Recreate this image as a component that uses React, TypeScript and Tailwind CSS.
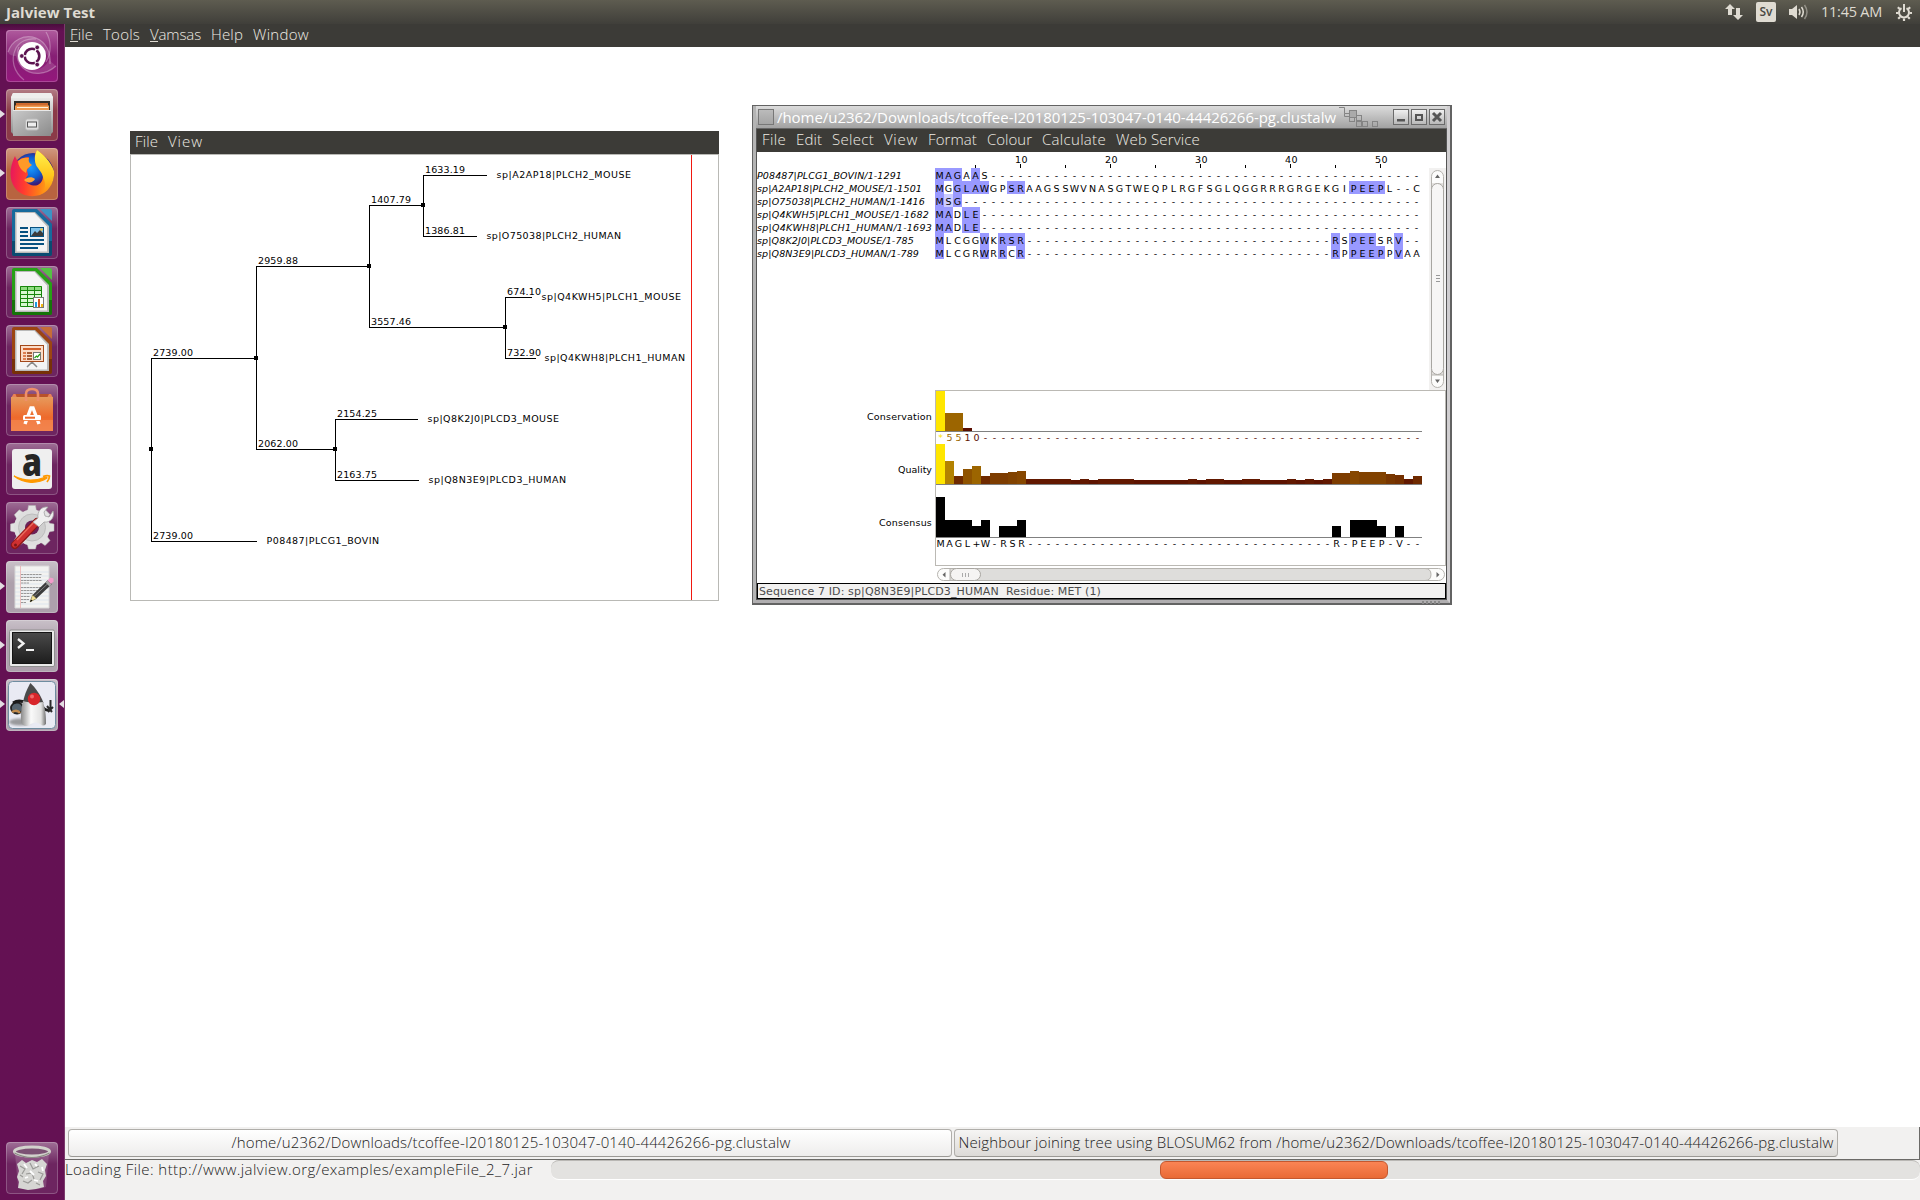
import React, { useLayoutEffect, useRef, useState } from "react";

/* Text whose letter spacing is measured so that it takes the given width. */
function Fit({ w, children, className = "" }: { w: number; children: string; className?: string }) {
  const ref = useRef<HTMLSpanElement>(null);
  const [ls, setLs] = useState(0);
  useLayoutEffect(() => {
    const el = ref.current;
    if (!el) return;
    const natural = el.getBoundingClientRect().width;
    setLs((w - natural) / children.length);
  }, [w, children]);
  return (
    <span ref={ref} style={{ letterSpacing: ls }} className={"inline-block shrink-0 whitespace-pre " + className}>
      {children}
    </span>
  );
}

/* ---------------------------------------------------------------- launcher */

function DashIcon() {
  return (
    <>
      <rect width="52" height="52" rx="4" fill="url(#dash)" />
      <g fill="none" stroke="#fff" strokeOpacity=".3" strokeWidth="1.2">
        <path d="M2 22C6 10 18 4 30 8c10 4 15 14 14 26" />
        <path d="M18 50C8 42 4 30 10 18c4-7 12-10 20-9" />
        <path d="M50 36c-10 9-24 10-33 2C11 32 10 24 13 17" />
        <path d="M40 2c5 8 6 20 0 30" />
      </g>
      <path d="M2 22C6 10 18 4 30 8c10 4 15 14 14 26-2-12-9-20-18-20-9-1-16 5-16 12C5 26 3 24 2 22Z" fill="#fff" fillOpacity=".14" />
      <path d="M50 36c-10 9-24 10-33 2l-4-5c8 10 25 9 30-3Z" fill="#fff" fillOpacity=".13" />
      <circle cx="26" cy="26" r="14" fill="#fff" />
      <circle cx="26" cy="26" r="7.3" fill="none" stroke="#5c1350" strokeWidth="2.6" strokeDasharray="13.8 1.5" strokeDashoffset="6.9" />
      {[[15.8, 26], [31.2, 17.4], [31.2, 34.6]].map(([x, y]) => (
        <circle key={x + "-" + y} cx={x} cy={y} r="2.3" fill="#5c1350" stroke="#fff" strokeWidth=".7" />
      ))}
    </>
  );
}

function FilesIcon() {
  return (
    <>
      <path d="M7 4h38l2 4v35l-3 3H8l-3-3V8Z" fill="url(#steel)" />
      <path d="M7 4h38l2 5H5Z" fill="#eee" />
      <rect x="8" y="12" width="36" height="11" fill="#2f2c28" />
      <path d="M10 14h32v8H10Z" fill="#cf6a2e" />
      <path d="M9 16.500h34v6H9Z" fill="#ee9a50" />
      <path d="M11 18.500h31" stroke="#fff3dc" strokeWidth="1" />
      <path d="M7 21h38v26H7Z" fill="url(#steel2)" />
      <path d="M7 21.500h38" stroke="#e8e8e8" />
      <rect x="19.500" y="30" width="13" height="11" rx="2" fill="#ddd" stroke="#bbb" />
      <rect x="21.500" y="33" width="9" height="5" fill="#eee" stroke="#555" />
    </>
  );
}

function FirefoxIcon() {
  return (
    <>
      <circle cx="27" cy="26" r="21" fill="url(#fxblue)" />
      <path d="M31 2c7 5 13 12 15 19 3 12-3 22-12 26-10 3-20 0-25-7C3 32 3 20 9 8c1 3 2 4 3 5 3-3 7-4 11-4-1 3-1 5 2 8l-4 5 1 5c-3 3-3 7 1 9 7 4 14 0 14-8 0-5-3-8-6-10-3-6-3-11 0-16Z" fill="url(#fxfire)" />
      <path d="M31 2c7 5 14 12 17 21 1 10-4 19-12 23 5-7 3-12 1-17-1-5-5-8-7-12-2-6-1-11 1-15Z" fill="url(#fxyellow)" />
      <path d="M12 13c3-3 7-4 11-3-1 3 0 5 3 7l-5 4-1 4c-4-2-8-7-8-12Z" fill="#ff9a28" />
      <path d="M18 32c3-3 8-4 11-1-2 4-7 5-11 1Z" fill="#ffa436" />
    </>
  );
}

function Sheet({ c, l, d }: { c: string; l: string; d: string }) {
  return (
    <>
      <path d="M8 2h23L46 17v30a2 2 0 0 1-2 2H8a2 2 0 0 1-2-2V4a2 2 0 0 1 2-2Z" fill={c} />
      <path d="M6 34h40v13a2 2 0 0 1-2 2H8a2 2 0 0 1-2-2Z" fill={d} fillOpacity=".55" />
      <path d="M9 5h20l14 14v27H9Z" fill="#b9b9b9" />
      <path d="M10.500 6h18L41 19.500V44.500H10.500Z" fill="#f4f4f4" />
      <path d="M34 2h10a2 2 0 0 1 2 2v10Z" fill={l} />
    </>
  );
}

function WriterIcon() {
  return (
    <>
      <Sheet c="#176a9c" l="#3d93c4" d="#00324e" />
      <path d="M14 21h8M14 25h8M14 29h8M14 33h24M14 37h24M14 41h18" stroke="#075180" strokeWidth="2" />
      <rect x="24.500" y="20.500" width="13" height="9" fill="#7fc3ea" stroke="#075180" />
      <path d="m25 29 4-5 2 2 3-3 3 3v3Z" fill="#3b3b3b" />
      <circle cx="35.500" cy="22.500" r="1.200" fill="#f6c43c" />
    </>
  );
}

function CalcIcon() {
  return (
    <>
      <Sheet c="#27a016" l="#55c144" d="#085000" />
      <rect x="14" y="20" width="22" height="21" fill="#d8f7d0" />
      <rect x="14" y="20" width="22" height="4" fill="#8fdc80" />
      <path d="M14.500 20.500h21v20h-21ZM14 24.500h22M14 28.500h22M14 32.500h22M14 36.500h22M21.500 20v21M28.500 20v21" fill="none" stroke="#17860b" />
      <rect x="27.500" y="31.500" width="10" height="10" fill="#fff" stroke="#777" />
      <path d="M29 36h2v5h-2Z" fill="#1d9be0" />
      <path d="M32 33h2v8h-2Z" fill="#d2571e" />
      <path d="M35 38h2v3h-2Z" fill="#f2b713" />
    </>
  );
}

function ImpressIcon() {
  return (
    <>
      <Sheet c="#9c4513" l="#c66d37" d="#5a2100" />
      <path d="m21 42 5-5 5 5M26 35v4" stroke="#888" strokeWidth="1.500" fill="none" />
      <rect x="14.500" y="20.500" width="23" height="16" fill="#fbdcc8" stroke="#a2481a" />
      <path d="M17 24h18" stroke="#d3602a" strokeWidth="2" />
      <path d="M17 28h3M17 31h3M17 34h3" stroke="#d3602a" strokeWidth="1.600" />
      <path d="M21 28h5M21 31h5M21 34h5" stroke="#8d3508" strokeWidth="1.600" />
      <rect x="27.500" y="27.500" width="7" height="7" fill="#fff" stroke="#777" />
      <path d="m28.500 33 2-2 1 1 2.500-3" stroke="#27a016" strokeWidth="1.200" fill="none" />
    </>
  );
}

function SoftwareIcon() {
  return (
    <>
      <path d="M7 10h38v6H7Z" fill="#b8512a" />
      <path d="M5 14 7.500 10h2L11 14ZM41 14l2-4h2l2 4Z" fill="#e88258" />
      <path d="M5 13h42v34H5Z" fill="url(#bag)" />
      <path d="M5 36h42v11H5Z" fill="#f58a55" fillOpacity=".6" />
      <path d="M20 17V10q0-5 6-5t6 5v7" fill="none" stroke="#ee8f6b" strokeWidth="2.600" />
      <g fill="none" stroke="#fff" strokeWidth="3.400">
        <path d="m19 40 6-16h2l6 16" />
      </g>
      <rect x="17" y="31" width="18" height="5.500" rx="1.500" fill="#fff" />
      <path d="M19 33.700h10" stroke="#ee6a2c" strokeWidth="2" />
      <path d="M15 36.500h22" stroke="#f07a3e" strokeWidth=".9" />
    </>
  );
}

function AmazonIcon() {
  return (
    <>
      <rect x="6" y="6" width="40" height="40" rx="3" fill="#efefef" />
      <text x="26" y="33" textAnchor="middle" fontFamily="Open Sans" fontWeight="800" fontSize="38" fill="#252525" textLength="20" lengthAdjust="spacingAndGlyphs">a</text>
      <path d="M8 33c10 8 24 8 33 2l-1-1c-10 4-22 4-32-1Z" fill="#ff9900" stroke="#ff9900" strokeWidth="1.300" />
      <path d="M37 33.500q4-1.500 6.500-.5 0 3-2.500 6" fill="none" stroke="#ff9900" strokeWidth="1.800" />
    </>
  );
}

function SettingsIcon() {
  return (
    <>
      <g fill="#e3e3e3" stroke="#b5b5b5" strokeWidth=".5">
        {[0, 45, 90, 135].map((a) => (
          <path key={a} d="M21.500 9 22.500 3.500h7l1 5.500v34l-1 4h-7l-1-4Z" transform={"rotate(" + a + " 26 25.500)"} />
        ))}
      </g>
      <circle cx="26" cy="25.500" r="18" fill="#dfdfdf" />
      <circle cx="26" cy="25.500" r="13.500" fill="#cfcfcf" stroke="#bdbdbd" />
      <circle cx="26" cy="25.500" r="7" fill="#6b2158" />
      <path d="M9 43 31 20" stroke="#8e1616" strokeWidth="8" strokeLinecap="round" />
      <path d="M9 42.500 31 20" stroke="#cf3030" strokeWidth="6" strokeLinecap="round" />
      <path d="M11 38 29 19" stroke="#e86a5c" strokeWidth="1.500" />
      <path d="m27 20 5-4c-1-6 3-12 10-11l-4 5 1 4 4 1 4-6c2 7-3 12-9 11l-5 5Z" fill="#f0f0f0" stroke="#a5a5a5" strokeWidth=".8" />
      <circle cx="9.500" cy="43" r="1.500" fill="#7c1717" />
    </>
  );
}

function EditorIcon() {
  return (
    <>
      <path d="M9 5h34v42H9Z" fill="#f3f3f1" stroke="#d8d8d8" />
      {[13, 17, 21, 25, 29, 33, 37, 41, 45].map((y) => (
        <path key={y} d={"M9 " + (y - 2) + "h34"} stroke="#c4d6ea" strokeWidth=".5" />
      ))}
      <path d="M14.500 5v42" stroke="#eaa7a7" strokeWidth=".7" />
      <path d="M15 13.500h21M15 16.500h20M15 19.500h21M15 22h8M15 26.500h21M15 29.500h19M15 32.500h12M15 35.500h9M15 38.500h8M15 41.500h5" stroke="#8f8f8f" strokeWidth=".9" strokeDasharray="2.500 .5" />
      <path d="m24 41 2.500-7L42 19l4 4-15.500 14.500Z" fill="#3c3c3c" />
      <path d="m28 35.500 15-14" stroke="#888" strokeWidth=".9" />
      <path d="m24 41 2.500-7 4 3.500Z" fill="#f3e295" stroke="#6b6436" strokeWidth=".4" />
      <path d="m24 41 1-2.500 1.500 1.300Z" fill="#000" />
      <path d="m39.500 21.500 2-2 4 4-2 2Z" fill="#aaa" />
      <path d="m41.500 19.500 3-3 3 1 0 3-2.500 2.500Z" fill="#f39ccb" />
    </>
  );
}

function TerminalIcon() {
  return (
    <>
      <rect x="3.500" y="10" width="45" height="36.500" rx="1.500" fill="#e9e9e9" stroke="#8f8f8f" strokeWidth="1" />
      <rect x="6.500" y="12.500" width="39" height="31" fill="url(#term)" stroke="#141414" strokeWidth="1" />
      <path d="m12 19 5.500 4.500L12 28" stroke="#f2f2f2" strokeWidth="2.300" fill="none" />
      <path d="M20 30h8" stroke="#f2f2f2" strokeWidth="2" />
    </>
  );
}

function DukeIcon() {
  return (
    <>
      <rect x="2.500" y="2.500" width="47" height="47" rx="4" fill="#e9eaf3" stroke="#6f8da0" />
      <ellipse cx="14" cy="43" rx="11" ry="3.500" fill="#777" fillOpacity=".7" filter="url(#soft)" />
      <g filter="url(#slight)">
        <ellipse cx="11" cy="29" rx="6" ry="5.500" fill="#54636e" stroke="#222" strokeWidth="1.800" />
        <path d="M6 33q5-3 8 1" stroke="#c08a4e" strokeWidth="2.500" fill="none" />
        <path d="M7 24q6-4 13 0M35 26q4 6 8 5" stroke="#1b1b1b" strokeWidth="2.800" fill="none" />
        <path d="M44.500 21v9M41 27l5 6M47 28l-5 5" stroke="#2b2b2b" strokeWidth="2" />
        <path d="M17 23C19 14 22 8 24.500 4c4 4 10 11 13 20l-8 4Z" fill="#4b4b4b" />
        <path d="M17 22c6 2 14 2 20 1 3 9 3 17 3 22q-3 3-6 0-5-3-9 0-5 4-9 0c-2-5-1-15 1-23Z" fill="url(#belly)" />
        <circle cx="28" cy="20" r="6.200" fill="#d8262b" />
        <circle cx="26" cy="17.500" r="2" fill="#f06a6a" />
      </g>
    </>
  );
}

function TrashIcon() {
  return (
    <>
      <path d="m9 11 3 34q14 5 28 0l3-34Z" fill="#fff" fillOpacity=".15" />
      <path d="m11 22 5-4 4 3 6-3 5 2 5-3 5 5-2 6 1 6-3 5 1 6-8 2-8 1-10-2 1-6-2-5 2-6Z" fill="#d6d6d3" />
      <path d="m14 24 5 3-3 5M24 21l3 6 6-3M20 32l6-1 2 6M32 30l5 2-3 6M17 39l5 2 4-3M30 41l4 2M14 33l3 2" stroke="#9a9a97" strokeWidth="1.200" fill="none" />
      <path d="m18 22 3 4M29 22l2 2M24 29l4 4M36 25l1 4M19 36l3-1M28 38l4 1" stroke="#fff" strokeWidth="1.800" />
      <ellipse cx="26" cy="9.500" rx="17.500" ry="4.500" fill="#7c5274" stroke="#d2d2cc" strokeWidth="3" />
      <path d="M8.500 11q17.500 9 35 0" stroke="#8b8b84" strokeWidth="1.200" fill="none" />
    </>
  );
}

const tint: Record<string, string> = {
  dash: "bg-[#8d2a78]",
  files: "bg-[#8b3a48]",
  firefox: "bg-[#b86440]",
  plain: "bg-[#6d2560]",
  pale: "bg-[#ada0ac]",
};

const apps: { name: string; bg: string; icon: React.ReactNode; running?: boolean; focused?: boolean }[] = [
  { name: "Dash", bg: "dash", icon: <DashIcon /> },
  { name: "Files", bg: "files", icon: <FilesIcon />, running: true },
  { name: "Firefox", bg: "firefox", icon: <FirefoxIcon />, running: true },
  { name: "Writer", bg: "plain", icon: <WriterIcon /> },
  { name: "Calc", bg: "plain", icon: <CalcIcon /> },
  { name: "Impress", bg: "plain", icon: <ImpressIcon /> },
  { name: "Software", bg: "plain", icon: <SoftwareIcon /> },
  { name: "Amazon", bg: "plain", icon: <AmazonIcon /> },
  { name: "Settings", bg: "plain", icon: <SettingsIcon /> },
  { name: "Editor", bg: "pale", icon: <EditorIcon />, running: true },
  { name: "Terminal", bg: "pale", icon: <TerminalIcon />, running: true },
  { name: "Java", bg: "pale", icon: <DukeIcon />, running: true, focused: true },
];

function Tile({ bg, icon, running, focused }: { bg: string; icon: React.ReactNode; running?: boolean; focused?: boolean }) {
  return (
    <div className="relative flex w-16 justify-center">
      <div className={"h-[52px] w-[52px] rounded-[4px] " + tint[bg]}>
        <svg className="overflow-visible" width="52" height="52" viewBox="0 0 52 52">
          <rect width="52" height="22" rx="4" fill="url(#gloss)" />
          {icon}
          <rect x=".5" y=".5" width="51" height="51" rx="3.500" fill="none" stroke="#fff" strokeOpacity=".22" />
        </svg>
      </div>
      {running && <div className="absolute top-[21px] left-0 h-0 w-0 border-y-[4px] border-l-[5px] border-y-transparent border-l-[#e3dde2]" />}
      {focused && <div className="absolute top-[21px] right-0 h-0 w-0 border-y-[4px] border-r-[5px] border-y-transparent border-r-[#e3dde2]" />}
    </div>
  );
}

function Launcher() {
  return (
    <aside className="flex w-[65px] shrink-0 flex-col gap-[7px] border-r border-[#7c3a6c] bg-[#641153] bg-linear-to-b from-[#4a0d3d] from-0% to-[#641153] to-[0.6%] pt-[6px] pb-[6px]">
      <svg width="0" height="0" className="absolute">
        <defs>
          <linearGradient id="gloss" x2="0" y2="1"><stop stopColor="#fff" stopOpacity=".34" /><stop offset="1" stopColor="#fff" stopOpacity="0" /></linearGradient>
          <linearGradient id="dash" x2="0" y2="1"><stop stopColor="#b05b9e" /><stop offset=".5" stopColor="#861f74" /><stop offset="1" stopColor="#94177c" /></linearGradient>
          <linearGradient id="steel" x2="0" y2="1"><stop stopColor="#f4f4f4" /><stop offset="1" stopColor="#8c8c8c" /></linearGradient>
          <linearGradient id="steel2" x2="1" y2="1"><stop stopColor="#c9c9c9" /><stop offset="1" stopColor="#8b8b8b" /></linearGradient>
          <radialGradient id="fxblue" cx=".45" cy=".35"><stop stopColor="#1a9bff" /><stop offset=".5" stopColor="#0d5fd0" /><stop offset=".8" stopColor="#3a1e7a" /></radialGradient>
          <linearGradient id="fxfire" x1="0" y1=".4" x2="1" y2=".5"><stop stopColor="#e8175d" /><stop offset=".35" stopColor="#ff3b30" /><stop offset=".7" stopColor="#ff7a18" /><stop offset="1" stopColor="#ffb515" /></linearGradient>
          <linearGradient id="fxyellow" x2="0" y2="1"><stop stopColor="#fff44f" /><stop offset=".6" stopColor="#ffc51a" /><stop offset="1" stopColor="#ff8a16" /></linearGradient>
          <linearGradient id="bag" x2="0" y2="1"><stop stopColor="#e69a5c" /><stop offset=".6" stopColor="#ee6a2c" /><stop offset="1" stopColor="#ee7a42" /></linearGradient>
          <linearGradient id="term" x2="0" y2="1"><stop stopColor="#4a4a4a" /><stop offset="1" stopColor="#1d1d1d" /></linearGradient>
          <linearGradient id="belly" x2="1" y2="0"><stop stopColor="#8a8a8a" /><stop offset=".4" stopColor="#fafafa" /><stop offset=".8" stopColor="#e2e2e2" /><stop offset="1" stopColor="#6e6e6e" /></linearGradient>
          <filter id="soft"><feGaussianBlur stdDeviation="1.200" /></filter>
          <filter id="slight"><feGaussianBlur stdDeviation=".500" /></filter>
        </defs>
      </svg>
      {apps.map((a) => (
        <Tile key={a.name} bg={a.bg} icon={a.icon} running={a.running} focused={a.focused} />
      ))}
      <div className="mt-auto">
        <Tile bg="plain" icon={<TrashIcon />} />
      </div>
    </aside>
  );
}

/* ---------------------------------------------------------------- top panel */

function TopPanel() {
  return (
    <header className="flex h-6 items-center justify-between bg-linear-to-b from-[#5e5c50] to-[#403f3a] pr-2 pl-[6px] text-[#dfdbd2]">
      <Fit w={89} className="pb-px text-[15px] leading-[22px] font-bold">Jalview Test</Fit>
      <div className="flex h-6 items-center">
        <svg width="19" height="18" viewBox="0 0 19 18" fill="#dfdbd2">
          <path d="M5 1 0 6h3v6h4V6h3Z" />
          <path d="M13 17l5-5h-3V5h-4v7H8Z" />
        </svg>
        <div className="ml-3 flex h-5 w-5 items-center justify-center rounded-[2px] bg-[#dfdbd2] text-[12px] font-semibold text-[#4a4943]">
          <Fit w={13}>Sv</Fit>
        </div>
        <svg className="ml-[13px]" width="20" height="16" viewBox="0 0 20 16" fill="none" stroke="#dfdbd2" strokeWidth="1.500">
          <path d="M0 5h3l5-4v14l-5-4H0Z" fill="#dfdbd2" stroke="none" />
          <path d="M10 5q2 3 0 6M12.500 3q3.500 5 0 10" />
          <path d="M15.500 1q5 7 0 14" strokeOpacity=".45" />
        </svg>
        <Fit w={61} className="ml-3 pb-px text-[14.5px] leading-[22px]">11:45 AM</Fit>
        <svg className="ml-[14px]" width="16" height="17" viewBox="0 0 16 17" fill="none" stroke="#dfdbd2">
          <path d="M5.500 4.200A5 5 0 1 0 10.500 4.200" strokeWidth="2" />
          <path d="M8 0v8" strokeWidth="2" />
          <path d="M0 9h2.500M13.500 9H16M8 14.500V17M1.800 3.200l2 1.800M14.200 3.200l-2 1.800M2.200 14.800l1.900-1.800M13.800 14.800l-1.900-1.800" strokeWidth="2.200" />
        </svg>
      </div>
    </header>
  );
}

type Item = { label: string; w: number; mnemonic?: boolean };

function MenuBar({ items, className }: { items: Item[]; className: string }) {
  return (
    <nav className={"flex h-[23px] shrink-0 items-start gap-[10px] bg-[#3c3b37] text-[15px] leading-[21px] font-light text-[#efece4] " + className}>
      {items.map((m) => (
        <span key={m.label} className="relative">
          <Fit w={m.w}>{m.label}</Fit>
          {m.mnemonic && <span className="absolute top-[17px] left-0 h-px w-[8px] bg-[#dfdbd2]" />}
        </span>
      ))}
    </nav>
  );
}

/* ---------------------------------------------------------------- tree window */

const hLines = [
  [151, 256, 358], [151, 256, 541], [256, 369, 266], [256, 335, 449], [369, 423, 205], [369, 505, 327],
  [423, 486, 175], [423, 476, 236], [505, 531, 297], [505, 535, 358], [335, 417, 419], [335, 418, 480],
];
const vLines = [[151, 358, 541], [256, 266, 449], [369, 205, 327], [423, 175, 236], [505, 297, 358], [335, 419, 480]];
const nodes = [[151, 449], [256, 358], [369, 266], [423, 205], [505, 327], [335, 449]];
const lengths: [number, number, string][] = [
  [423, 175, "1633.19"], [369, 205, "1407.79"], [423, 236, "1386.81"], [256, 266, "2959.88"], [505, 297, "674.10"],
  [369, 327, "3557.46"], [505, 358, "732.90"], [151, 358, "2739.00"], [335, 419, "2154.25"], [256, 449, "2062.00"],
  [335, 480, "2163.75"], [151, 541, "2739.00"],
];
const leaves: [number, number, number, string][] = [
  [496, 175, 135, "sp|A2AP18|PLCH2_MOUSE"], [486, 236, 135, "sp|O75038|PLCH2_HUMAN"], [541, 297, 140, "sp|Q4KWH5|PLCH1_MOUSE"],
  [544, 358, 141, "sp|Q4KWH8|PLCH1_HUMAN"], [427, 419, 132, "sp|Q8K2J0|PLCD3_MOUSE"], [428, 480, 138, "sp|Q8N3E9|PLCD3_HUMAN"],
  [266, 541, 113, "P08487|PLCG1_BOVIN"],
];

function TreeWindow() {
  return (
    <section className="absolute top-[84px] left-[65px] flex h-[470px] w-[589px] flex-col bg-white">
      <MenuBar className="pl-[5px]" items={[{ label: "File", w: 23 }, { label: "View", w: 35 }]} />
      <div className="h-[447px] border border-[#b9b9b5]">
        <svg width="587" height="445" viewBox="131 155 587 445" shapeRendering="crispEdges" fontFamily="DejaVu Sans" fontSize="9.5">
          {hLines.map(([a, b, y]) => <rect key={a + "h" + y} x={a} y={y} width={b - a + 1} height="1" />)}
          {vLines.map(([x, a, b]) => <rect key={x + "v" + a} x={x} y={a} width="1" height={b - a + 1} />)}
          {nodes.map(([x, y]) => <rect key={x + "n" + y} x={x - 2} y={y - 2} width="4" height="4" />)}
          {lengths.map(([x, y, t]) => <text key={x + "t" + y} x={x + 2} y={y - 2} textLength={t.length === 7 ? 40 : 34}>{t}</text>)}
          {leaves.map(([x, y, w, t]) => <text key={t} x={x + 0.5} y={y + 3} textLength={w - 0.5}>{t}</text>)}
          <rect x="691" y="155" width="1" height="445" fill="#f01810" />
        </svg>
      </div>
    </section>
  );
}

/* ---------------------------------------------------------------- alignment window */

const gap = (n: number) => "-".repeat(n);
const rows: { id: string; w: number; seq: string; on: number[]; pale?: number[] }[] = [
  { id: "P08487|PLCG1_BOVIN/1-1291", w: 145, seq: "MAGAAS" + gap(48), on: [1, 2, 3, 5] },
  { id: "sp|A2AP18|PLCH2_MOUSE/1-1501", w: 165, seq: "MGGLAWGPSRAAGSSWVNASGTWEQPLRGFSGLQGGRRRGRGEKGIPEEPL--C", on: [1, 3, 4, 5, 6, 9, 10, 47, 48, 49, 50] },
  { id: "sp|O75038|PLCH2_HUMAN/1-1416", w: 168, seq: "MSG" + gap(51), on: [1, 3], pale: [2] },
  { id: "sp|Q4KWH5|PLCH1_MOUSE/1-1682", w: 172, seq: "MADLE" + gap(49), on: [1, 2, 4, 5] },
  { id: "sp|Q4KWH8|PLCH1_HUMAN/1-1693", w: 175, seq: "MADLE" + gap(49), on: [1, 2, 4, 5] },
  { id: "sp|Q8K2J0|PLCD3_MOUSE/1-785", w: 157, seq: "MLCGGWKRSR" + gap(34) + "RSPEESRV--", on: [1, 6, 8, 9, 10, 45, 47, 48, 49, 52] },
  { id: "sp|Q8N3E9|PLCD3_HUMAN/1-789", w: 162, seq: "MLCGRWRRCR" + gap(34) + "RPPEEPPVAA", on: [1, 6, 8, 10, 45, 47, 48, 49, 50, 52] },
];

const conservation = [40, 18, 18, 3];
const quality = [
  40, 23, 8, 15, 18, 8, 11, 11, 12, 13, 5, 5, 5, 5, 5, 4, 5, 4, 5, 5, 5, 5, 4, 4, 4, 4, 4, 4, 5, 4, 5, 5, 4, 4, 5, 5, 4, 4, 4,
  5, 4, 5, 4, 5, 11, 11, 13, 12, 12, 12, 10, 9, 5, 8,
];
const consensus = [40, 17, 17, 17, 11, 17, 0, 11, 11, 17, ...Array(34).fill(0), 11, 0, 17, 17, 17, 11, 0, 11, 0, 0];

const heat = (h: number) =>
  h >= 40 ? "#ffe600" : "rgb(" + Math.round(75 + 4.5 * h) + "," + Math.max(0, Math.round(5.88 * h - 5)) + ",0)";

function Bars({ data, colour }: { data: number[]; colour: (h: number) => string }) {
  return (
    <div className="flex h-[41px] w-[486px] items-end border-b border-[#808080]">
      {data.map((h, i) => (
        <div key={i} className="w-[9px] shrink-0" style={{ height: h, backgroundColor: colour(h) }} />
      ))}
    </div>
  );
}

function Letters({ text, colours }: { text: string; colours?: string[] }) {
  return (
    <div className="flex h-[13px] leading-[11px]">
      {text.split("").map((c, i) => (
        <span key={i} className="flex w-[9px] shrink-0 justify-center" style={colours ? { color: colours[i] ?? "#5a0c00" } : undefined}>
          {c}
        </span>
      ))}
    </div>
  );
}

function TitleButton({ children }: { children: React.ReactNode }) {
  return (
    <div className="h-4 w-4 border border-[#6b6b6b] bg-linear-to-b from-[#f0f0f0] to-[#b9b9b9]">
      <svg width="14" height="14" viewBox="0 0 14 14">{children}</svg>
    </div>
  );
}

function AlignmentWindow() {
  return (
    <section className="absolute top-[58px] left-[687px] flex h-[500px] w-[700px] flex-col border border-r-2 border-b-2 border-[#636363] bg-[#b8b6b8]">
      <div className="flex h-[497px] flex-col border-x-[3px] border-b-[3px] border-r-[#d0ced0] border-b-[#b0aeb0] border-l-[#b4b4b4]">
        {/* title */}
        <div className="flex h-[23px] shrink-0 items-center border-b border-[#666] bg-linear-to-b from-[#dcdcdc] to-[#a2a2a2] pl-[2px]">
          <div className="h-4 w-4 border border-[#777] bg-linear-to-b from-[#bbb] to-[#a5a5a5]" />
          <Fit w={559} className="ml-[3px] text-[15px] leading-5 text-white">
            /home/u2362/Downloads/tcoffee-I20180125-103047-0140-44426266-pg.clustalw
          </Fit>
          <svg className="ml-[3px] self-start" width="42" height="22" viewBox="0 0 42 22" fill="#aaa" stroke="#848484">
            <path d="M0 1.500h5.500v6H10M5.500 7.500v3H10" fill="none" />
            <rect x="10.500" y="4.500" width="7" height="7" /><rect x="10.500" y="11.500" width="5" height="4" fill="none" />
            <rect x="17.500" y="9.500" width="5" height="5" fill="none" /><rect x="17.500" y="15.500" width="5" height="5" />
            <rect x="23.500" y="15.500" width="5" height="5" fill="none" /><rect x="33.500" y="15.500" width="5" height="5" fill="none" />
          </svg>
          <div className="mr-[2px] ml-auto flex gap-[2px]">
            <TitleButton><path d="M3 9h8v2.500H3Z" fill="#555" /></TitleButton>
            <TitleButton><path d="M4 5h6v5H4Z" fill="none" stroke="#555" strokeWidth="2" /></TitleButton>
            <TitleButton><path d="m3 3 8 8M11 3l-8 8" stroke="#555" strokeWidth="3" /></TitleButton>
          </div>
        </div>
        <div className="flex h-[471px] flex-col border-r border-b border-l border-[#555]">
          <MenuBar
            className="pl-[5px]"
            items={[
              { label: "File", w: 24 }, { label: "Edit", w: 26 }, { label: "Select", w: 42 }, { label: "View", w: 34 },
              { label: "Format", w: 49 }, { label: "Colour", w: 45 }, { label: "Calculate", w: 64 }, { label: "Web Service", w: 84 },
            ]}
          />
          <div className="flex h-[431px] flex-col bg-white font-['DejaVu_Sans',sans-serif] text-[9.5px] text-black">
            {/* ruler */}
            <div className="flex h-4 shrink-0 pl-[178px]">
              {Array.from({ length: 54 }, (_, i) => (
                <div key={i} className="relative flex w-[9px] shrink-0 justify-center leading-3">
                  {(i + 1) % 10 === 0 && <span className="absolute top-[2px] left-[-1px]"><Fit w={13}>{String(i + 1)}</Fit></span>}
                  {(i + 1) % 10 === 0 && <span className="absolute bottom-0 h-[4px] w-px bg-black" />}
                  {(i + 1) % 10 === 5 && <span className="absolute bottom-0 h-[3px] w-px bg-black" />}
                </div>
              ))}
            </div>
            {/* sequences */}
            <div className="flex h-[222px] shrink-0">
              <div className="flex w-[178px] flex-col">
                {rows.map((r) => (
                  <Fit key={r.id} w={r.w} className="h-[13px] self-start leading-[15px] italic">{r.id}</Fit>
                ))}
              </div>
              <div className="flex flex-col">
                {rows.map((r) => (
                  <div key={r.id} className="flex h-[13px] leading-[15px]">
                    {r.seq.split("").map((c, i) => (
                      <span
                        key={i}
                        className={
                          "flex h-[13px] w-[9px] shrink-0 justify-center " +
                          (r.on.includes(i + 1) ? "bg-[#9999ff]" : r.pale?.includes(i + 1) ? "bg-[#ccccff]" : "")
                        }
                      >
                        {c}
                      </span>
                    ))}
                  </div>
                ))}
              </div>
              <div className="ml-auto flex w-[17px] justify-center bg-[#f2f1f0] pt-[2px] pb-[2px]">
                <svg width="14" height="218" viewBox="0 0 14 218">
                  <rect x=".5" y=".5" width="12" height="217" rx="6" fill="#fcfcfb" stroke="#b5b3ae" />
                  <path d="M.5 13v192h12V13" fill="#e4e2df" stroke="#b5b3ae" />
                  <rect x=".5" y="13.500" width="12" height="191" rx="6" fill="#f7f6f5" stroke="#a8a6a1" />
                  <path d="m4 8 2.500-3.500L9 8ZM4 209.500 6.500 213 9 209.500Z" fill="#666" />
                  <path d="M5 105.500h4M5 108.500h4M5 111.500h4" stroke="#999" />
                </svg>
              </div>
            </div>
            {/* annotations */}
            <div className="flex h-[176px] shrink-0">
              <div className="flex w-[175px] flex-col items-end gap-[40px] pt-[20px] leading-[13px]">
                <Fit w={65}>Conservation</Fit>
                <Fit w={34}>Quality</Fit>
                <Fit w={53}>Consensus</Fit>
              </div>
              <div className="ml-[3px] flex grow flex-col border border-[#bbb9b4]">
                <Bars data={conservation} colour={heat} />
                <Letters text={"*5510" + gap(49)} colours={["#ffe600", "#9c6800", "#9c6800", "#5f1600"]} />
                <div className="-mt-px"><Bars data={quality} colour={heat} /></div>
                <div className="mt-[12px]"><Bars data={consensus} colour={() => "#000"} /></div>
                <Letters text={"MAGL+W-RSR" + gap(34) + "R-PEEP-V--"} />
              </div>
            </div>
            {/* horizontal scroll bar */}
            <div className="flex h-[17px] shrink-0 pt-[2px] pl-[180px]">
              <svg width="508" height="14" viewBox="0 0 508 14">
                <rect x=".5" y=".5" width="507" height="12" rx="6" fill="#fcfcfb" stroke="#b5b3ae" />
                <path d="M13 .5h475q6 0 6 6t-6 6H13Z" fill="#dedddb" stroke="#b5b3ae" />
                <rect x="13.500" y=".5" width="30" height="12" rx="6" fill="#f5f4f3" stroke="#a8a6a1" />
                <path d="M8.500 4v5.500L5.500 6.800ZM499.500 4v5.500l3-2.700Z" fill="#666" />
                <path d="M25.500 5v4M28.500 5v4M31.500 5v4" stroke="#aaa" />
              </svg>
            </div>
          </div>
          <div className="flex h-4 shrink-0 border border-black bg-[#f2f1f0] pl-px font-['DejaVu_Sans',sans-serif] text-[11px] leading-[15px] text-[#4c4c4c]">
            <Fit w={342}>Sequence 7 ID: sp|Q8N3E9|PLCD3_HUMAN  Residue: MET (1)</Fit>
          </div>
        </div>
      </div>
      <div className="absolute right-[10px] bottom-[-1px] flex gap-[2px]">
        {[0, 1, 2, 3, 4].map((i) => <span key={i} className="h-[3px] w-[2px] bg-[#888]" />)}
      </div>
    </section>
  );
}

/* ---------------------------------------------------------------- page */

export default function App() {
  return (
    <div className="flex h-[1200px] w-[1920px] flex-col overflow-hidden bg-white font-['Open_Sans','Noto_Sans',sans-serif]">
      <TopPanel />
      <div className="flex h-[1176px]">
        <Launcher />
        <main className="flex w-[1855px] flex-col">
          <MenuBar
            className="pl-[5px]"
            items={[
              { label: "File", w: 23, mnemonic: true }, { label: "Tools", w: 37 }, { label: "Vamsas", w: 51, mnemonic: true },
              { label: "Help", w: 32 }, { label: "Window", w: 56 },
            ]}
          />
          <div className="relative h-[1080px] shrink-0 bg-white">
            <TreeWindow />
            <AlignmentWindow />
          </div>
          <div className="flex h-[33px] shrink-0 gap-[2px] border-r border-b border-[#6b6a67] bg-[#f2f1f0] pt-[2px] pl-[3px] text-[15px] leading-[25px] font-light text-[#222]">
            <div className="flex h-[28px] w-[884px] justify-center rounded-[4px] border border-[#b0aeaa] border-b-[#9b9995] bg-linear-to-b from-white to-[#eeedec] pl-[2px]">
              <Fit w={559}>/home/u2362/Downloads/tcoffee-I20180125-103047-0140-44426266-pg.clustalw</Fit>
            </div>
            <div className="flex h-[28px] w-[884px] justify-center rounded-[4px] border border-[#b0aeaa] border-b-[#9b9995] bg-linear-to-b from-[#f6f5f4] to-[#dcdad7]">
              <Fit w={875}>Neighbour joining tree using BLOSUM62 from /home/u2362/Downloads/tcoffee-I20180125-103047-0140-44426266-pg.clustalw</Fit>
            </div>
          </div>
          <div className="flex h-10 bg-[#f2f1f0]">
            <Fit w={468} className="text-[15px] leading-[19px] font-light text-[#222]">
              Loading File: http://www.jalview.org/examples/exampleFile_2_7.jar
            </Fit>
            <div className="ml-[18px] flex h-[20px] grow rounded-[8px] border-t border-b border-t-[#b9b7b4] border-b-white bg-[#e3e2e0] pl-[609px]">
              <div className="h-[18px] w-[228px] rounded-[6px] border border-[#c4582f] bg-linear-to-b from-[#fa8454] to-[#e96a35]" />
            </div>
          </div>
        </main>
      </div>
    </div>
  );
}
